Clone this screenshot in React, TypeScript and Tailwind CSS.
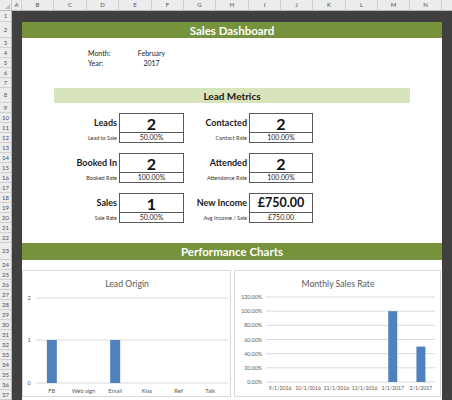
import React from 'react';

const cols = [
  { l: 'A', w: 'w-[10px]' },
  { l: 'B', w: 'w-[32px]' },
  { l: 'C', w: 'w-[33px]' },
  { l: 'D', w: 'w-[32px]' },
  { l: 'E', w: 'w-[33px]' },
  { l: 'F', w: 'w-[32px]' },
  { l: 'G', w: 'w-[32px]' },
  { l: 'H', w: 'w-[33px]' },
  { l: 'I', w: 'w-[32px]' },
  { l: 'J', w: 'w-[32px]' },
  { l: 'K', w: 'w-[33px]' },
  { l: 'L', w: 'w-[32px]' },
  { l: 'M', w: 'w-[32px]' },
  { l: 'N', w: 'w-[32px]' },
];

const rowHeight = (n: number) => {
  if (n === 1) return 'h-[11px]';
  if (n === 2) return 'h-[16px]';
  if (n === 8) return 'h-[15px]';
  if (n === 23) return 'h-[17px]';
  return 'h-[10px]';
};

const rows = Array.from({ length: 37 }, (_, i) => i + 1);

interface MetricProps {
  label: string;
  sub: string;
  value: string;
  rate: string;
  labelCls: string;
  subCls: string;
  boxCls: string;
  valueSize?: string;
}

const Metric: React.FC<MetricProps> = ({ label, sub, value, rate, labelCls, subCls, boxCls, valueSize = 'text-[16px]' }) => (
  <>
    <div className={`${labelCls} flex items-center justify-end pr-[2px] text-[9px] font-bold text-[#1a1a1a] whitespace-nowrap`}>
      {label}
    </div>
    <div className={`${subCls} flex items-center justify-end pr-[2px] text-[5.5px] text-[#333] whitespace-nowrap`}>
      {sub}
    </div>
    <div className={`${boxCls} flex flex-col border border-[#5a5a5a] bg-white`}>
      <div className={`flex-1 flex items-center justify-center font-bold leading-none text-[#111] pt-[1px] ${valueSize}`}>
        {value}
      </div>
      <div className="h-[10px] border-t border-[#5a5a5a] flex items-center justify-center text-[7px] leading-none text-[#222]">
        {rate}
      </div>
    </div>
  </>
);

const LeadOrigin = () => {
  const cats = ['FB', 'Web sign', 'Email', 'Kiss', 'Ref', 'Talk'];
  const vals = [1, 0, 1, 0, 0, 0];
  const left = 13;
  const step = 31.67;
  return (
    <svg width="207" height="125" className="block">
      <text x="104" y="16" textAnchor="middle" fontSize="8.7" fill="#595959">Lead Origin</text>
      {[[27, '2'], [69, '1'], [112, '0']].map(([y, t]) => (
        <g key={t as string}>
          <line x1={left} x2={205} y1={y as number} y2={y as number} stroke="#d9d9d9" strokeWidth="1" />
          <text x="6" y={(y as number) + 2} textAnchor="middle" fontSize="5.5" fill="#595959">{t}</text>
        </g>
      ))}
      {cats.map((c, i) => {
        const cx = left + step * (i + 0.5);
        const h = vals[i] * 43;
        return (
          <g key={c}>
            {h > 0 && <rect x={cx - 5} y={112 - h} width="10" height={h} fill="#4f81bd" />}
            <text x={cx} y="122" textAnchor="middle" fontSize="5.8" fill="#595959">{c}</text>
          </g>
        );
      })}
    </svg>
  );
};

const MonthlySales = () => {
  const cats = ['9/1/2016', '10/1/2016', '11/1/2016', '12/1/2016', '1/1/2017', '2/1/2017'];
  const vals = [0, 0, 0, 0, 100, 50];
  const ticks = [120, 100, 80, 60, 40, 20, 0];
  const y0 = 111;
  const scale = 85 / 120;
  const left = 31;
  const step = 169 / 6;
  return (
    <svg width="205" height="125" className="block">
      <text x="103" y="16" textAnchor="middle" fontSize="8.7" fill="#595959">Monthly Sales Rate</text>
      {ticks.map((t) => {
        const y = y0 - t * scale;
        return (
          <g key={t}>
            <line x1={left} x2={200} y1={y} y2={y} stroke="#d9d9d9" strokeWidth="1" />
            <text x="27" y={y + 2} textAnchor="end" fontSize="5.3" fill="#595959">{t.toFixed(2)}%</text>
          </g>
        );
      })}
      {cats.map((c, i) => {
        const cx = left + step * (i + 0.5);
        const h = vals[i] * scale;
        return (
          <g key={c}>
            {h > 0 && <rect x={cx - 4.5} y={y0 - h} width="9" height={h} fill="#4f81bd" />}
            <text x={cx} y="119" textAnchor="middle" fontSize="5.2" fill="#595959">{c}</text>
          </g>
        );
      })}
    </svg>
  );
};

export default function App() {
  return (
    <div className="w-[452px] h-[400px] overflow-hidden flex flex-col bg-[#404040] font-[family-name:Lato,'Noto_Sans',sans-serif]">
      {/* column headers */}
      <div className="flex h-[11px] shrink-0 bg-[#ececec] border-b border-[#b8b8b8]">
        <div className="w-[12px] border-r border-[#c8c8c8] relative">
          <div className="absolute right-[1px] bottom-[1px] w-0 h-0 border-l-[5px] border-l-transparent border-b-[5px] border-b-[#c0c0c0]" />
        </div>
        {cols.map((c) => (
          <div key={c.l} className={`${c.w} border-r border-[#d0d0d0] flex items-center justify-center text-[6px] text-[#505050] leading-none`}>
            {c.l}
          </div>
        ))}
        <div className="flex-1" />
      </div>

      <div className="flex flex-1">
        {/* row numbers */}
        <div className="w-[12px] shrink-0 flex flex-col bg-[#ececec] border-r border-[#b8b8b8]">
          {rows.map((r) => (
            <div key={r} className={`${rowHeight(r)} shrink-0 border-b border-[#d0d0d0] flex items-center justify-center text-[6px] text-[#505050] leading-none`}>
              {r}
            </div>
          ))}
        </div>

        {/* sheet */}
        <div className="flex-1 grid grid-cols-[10px_32px_33px_32px_33px_32px_32px_33px_32px_32px_33px_32px_32px_32px_1fr] grid-rows-[11px_16px_repeat(5,10px)_15px_repeat(14,10px)_17px_repeat(14,10px)] text-[#1a1a1a]">
          <div className="col-start-2 col-span-13 row-start-2 row-span-36 bg-white" />

          <div className="col-start-2 col-span-13 row-start-2 bg-[#76923c] flex items-center justify-center pt-[1px] text-white font-bold text-[11.5px] leading-none">
            Sales Dashboard
          </div>

          <div className="col-start-4 row-start-4 flex items-center pl-[1px] text-[7px] leading-none">Month:</div>
          <div className="col-start-5 col-span-2 row-start-4 flex items-center justify-center text-[7px] leading-none">February</div>
          <div className="col-start-4 row-start-5 flex items-center pl-[1px] text-[7px] leading-none">Year:</div>
          <div className="col-start-5 col-span-2 row-start-5 flex items-center justify-center text-[7px] leading-none">2017</div>

          <div className="col-start-3 col-span-11 row-start-8 bg-[#d8e4bc] flex items-center justify-center font-bold text-[10px] leading-none">
            Lead Metrics
          </div>

          <Metric label="Leads" sub="Lead to Sale" value="2" rate="50.00%"
            labelCls="col-start-3 col-span-2 row-start-10 row-span-2" subCls="col-start-3 col-span-2 row-start-12"
            boxCls="col-start-5 col-span-2 row-start-10 row-span-3" />
          <Metric label="Contacted" sub="Contact Rate" value="2" rate="100.00%"
            labelCls="col-start-7 col-span-2 row-start-10 row-span-2" subCls="col-start-7 col-span-2 row-start-12"
            boxCls="col-start-9 col-span-2 row-start-10 row-span-3" />
          <Metric label="Booked In" sub="Booked Rate" value="2" rate="100.00%"
            labelCls="col-start-3 col-span-2 row-start-14 row-span-2" subCls="col-start-3 col-span-2 row-start-16"
            boxCls="col-start-5 col-span-2 row-start-14 row-span-3" />
          <Metric label="Attended" sub="Attendance Rate" value="2" rate="100.00%"
            labelCls="col-start-7 col-span-2 row-start-14 row-span-2" subCls="col-start-7 col-span-2 row-start-16"
            boxCls="col-start-9 col-span-2 row-start-14 row-span-3" />
          <Metric label="Sales" sub="Sale Rate" value="1" rate="50.00%"
            labelCls="col-start-3 col-span-2 row-start-18 row-span-2" subCls="col-start-3 col-span-2 row-start-20"
            boxCls="col-start-5 col-span-2 row-start-18 row-span-3" />
          <Metric label="New Income" sub="Avg Income / Sale" value="£750.00" rate="£750.00" valueSize="text-[12.5px]"
            labelCls="col-start-7 col-span-2 row-start-18 row-span-2" subCls="col-start-7 col-span-2 row-start-20"
            boxCls="col-start-9 col-span-2 row-start-18 row-span-3" />

          <div className="col-start-2 col-span-13 row-start-23 bg-[#76923c] flex items-center justify-center pt-[1px] text-white font-bold text-[11.5px] leading-none">
            Performance Charts
          </div>

          <div className="col-start-2 col-span-13 row-start-25 row-span-13 flex items-start gap-[3px]">
            <div className="w-[209px] h-[127px] border border-[#d9d9d9] bg-white">
              <LeadOrigin />
            </div>
            <div className="w-[207px] h-[127px] border border-[#d9d9d9] bg-white">
              <MonthlySales />
            </div>
          </div>
        </div>
      </div>
    </div>
  );
}
